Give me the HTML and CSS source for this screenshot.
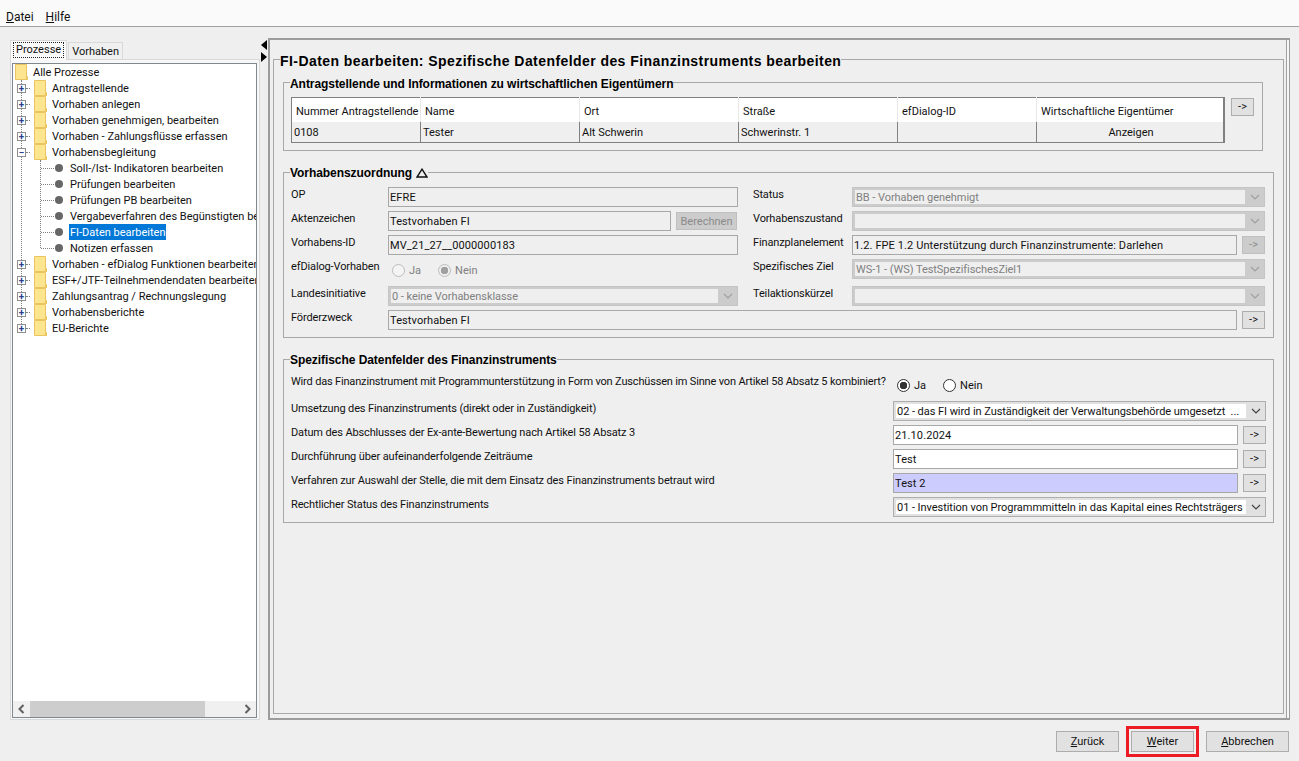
FILE: index.html
```html
<!DOCTYPE html>
<html>
<head>
    <meta charset="UTF-8">
    <title>FI-Daten bearbeiten</title>
    <link rel="stylesheet" href="styles.css">
</head>
<body>
    <svg class="icon-defs" width="0" height="0">
        <symbol id="folder" viewBox="0 0 13 16">
            <path d="M0.5 0.5H11.5V12.5H12.5V15.5H0.5Z" fill="#fde48f" stroke="#eac55f"/>
            <path d="M11.5 12.5V15.5" stroke="#eac55f"/>
        </symbol>
        <symbol id="chevron" viewBox="0 0 10 6">
            <path d="M1 1L5 5L9 1" fill="none" stroke="currentColor" stroke-width="1.2"/>
        </symbol>
    </svg>
    <div class="app">
        <div class="menubar">
            <span class="menu-item"><u>D</u>atei</span>
            <span class="menu-item"><u>H</u>ilfe</span>
        </div>
        <div class="main">
            <div class="side">
                <div class="tabs">
                    <div class="tab tab-active"><span class="tab-focus">Prozesse</span></div>
                    <div class="tab">Vorhaben</div>
                </div>
                <div class="tab-pane">
                    <div class="tree-box">
                        <div class="tree">
                            <div class="tree-row tree-top">
                                <svg class="folder"><use href="#folder"/></svg>
                                <span class="tree-label">Alle Prozesse</span>
                            </div>
                            <ul class="tree-root">
                                <li class="tree-row"><span class="expander">+</span><span class="stub"></span><svg class="folder"><use href="#folder"/></svg><span class="tree-label">Antragstellende</span></li>
                                <li class="tree-row"><span class="expander">+</span><span class="stub"></span><svg class="folder"><use href="#folder"/></svg><span class="tree-label">Vorhaben anlegen</span></li>
                                <li class="tree-row"><span class="expander">+</span><span class="stub"></span><svg class="folder"><use href="#folder"/></svg><span class="tree-label">Vorhaben genehmigen, bearbeiten</span></li>
                                <li class="tree-row"><span class="expander">+</span><span class="stub"></span><svg class="folder"><use href="#folder"/></svg><span class="tree-label">Vorhaben - Zahlungsflüsse erfassen</span></li>
                                <li class="tree-row"><span class="expander">&minus;</span><span class="stub"></span><svg class="folder"><use href="#folder"/></svg><span class="tree-label">Vorhabensbegleitung</span></li>
                                <li>
                                    <ul class="tree-children">
                                        <li class="tree-row tree-leaf"><span class="leaf-stub"></span><span class="bullet"></span><span class="tree-label">Soll-/Ist- Indikatoren bearbeiten</span></li>
                                        <li class="tree-row tree-leaf"><span class="leaf-stub"></span><span class="bullet"></span><span class="tree-label">Prüfungen bearbeiten</span></li>
                                        <li class="tree-row tree-leaf"><span class="leaf-stub"></span><span class="bullet"></span><span class="tree-label">Prüfungen PB bearbeiten</span></li>
                                        <li class="tree-row tree-leaf"><span class="leaf-stub"></span><span class="bullet"></span><span class="tree-label">Vergabeverfahren des Begünstigten bearbeiten</span></li>
                                        <li class="tree-row tree-leaf"><span class="leaf-stub"></span><span class="bullet"></span><span class="tree-label tree-selected">FI-Daten bearbeiten</span></li>
                                        <li class="tree-row tree-leaf"><span class="leaf-stub"></span><span class="bullet"></span><span class="tree-label">Notizen erfassen</span></li>
                                    </ul>
                                </li>
                                <li class="tree-row"><span class="expander">+</span><span class="stub"></span><svg class="folder"><use href="#folder"/></svg><span class="tree-label">Vorhaben - efDialog Funktionen bearbeiten</span></li>
                                <li class="tree-row"><span class="expander">+</span><span class="stub"></span><svg class="folder"><use href="#folder"/></svg><span class="tree-label">ESF+/JTF-Teilnehmendendaten bearbeiten</span></li>
                                <li class="tree-row"><span class="expander">+</span><span class="stub"></span><svg class="folder"><use href="#folder"/></svg><span class="tree-label">Zahlungsantrag / Rechnungslegung</span></li>
                                <li class="tree-row"><span class="expander">+</span><span class="stub"></span><svg class="folder"><use href="#folder"/></svg><span class="tree-label">Vorhabensberichte</span></li>
                                <li class="tree-row"><span class="expander">+</span><span class="stub"></span><svg class="folder"><use href="#folder"/></svg><span class="tree-label">EU-Berichte</span></li>
                            </ul>
                        </div>
                        <div class="hscroll">
                            <svg class="hscroll-arrow" viewBox="0 0 8 10"><path d="M6 1L2 5L6 9" fill="none" stroke="#606060" stroke-width="2"/></svg>
                            <div class="hscroll-track"><div class="hscroll-thumb"></div></div>
                            <svg class="hscroll-arrow" viewBox="0 0 8 10"><path d="M2 1L6 5L2 9" fill="none" stroke="#606060" stroke-width="2"/></svg>
                        </div>
                    </div>
                </div>
            </div>
            <div class="splitter">
                <svg width="8" height="22" viewBox="0 0 8 22">
                    <path d="M7 0V10L1 5Z" fill="#000"/>
                    <path d="M1 12V22L7 17Z" fill="#000"/>
                </svg>
            </div>
            <div class="frame">
                <fieldset class="section-main">
                    <legend class="legend-main">FI-Daten bearbeiten: Spezifische Datenfelder des Finanzinstruments bearbeiten</legend>

                    <fieldset class="section section-owners">
                        <legend>Antragstellende und Informationen zu wirtschaftlichen Eigentümern</legend>
                        <div class="owners-row">
                            <table class="owners-table">
                                <colgroup>
                                    <col class="col-nr"><col class="col-std"><col class="col-std"><col class="col-std"><col class="col-dialog"><col>
                                </colgroup>
                                <thead>
                                    <tr>
                                        <th>Nummer Antragstellende</th>
                                        <th>Name</th>
                                        <th>Ort</th>
                                        <th>Straße</th>
                                        <th>efDialog-ID</th>
                                        <th>Wirtschaftliche Eigentümer</th>
                                    </tr>
                                </thead>
                                <tbody>
                                    <tr>
                                        <td>0108</td>
                                        <td>Tester</td>
                                        <td>Alt Schwerin</td>
                                        <td>Schwerinstr. 1</td>
                                        <td></td>
                                        <td class="cell-center">Anzeigen</td>
                                    </tr>
                                </tbody>
                            </table>
                            <button class="arrow-btn owners-arrow">-&gt;</button>
                        </div>
                    </fieldset>

                    <fieldset class="section section-assign">
                        <legend>Vorhabenszuordnung <svg class="legend-triangle" viewBox="0 0 12 10"><path d="M6 1.2L11 9H1Z" fill="none" stroke="#111" stroke-width="1.4"/></svg></legend>
                        <div class="assign-grid">
                            <label class="field-label">OP</label>
                            <div class="text-field is-readonly">EFRE</div>
                            <span></span>
                            <label class="field-label">Status</label>
                            <div class="combo is-disabled span-3"><span class="combo-text">BB - Vorhaben genehmigt</span><span class="combo-arrow"><svg><use href="#chevron"/></svg></span></div>

                            <label class="field-label">Aktenzeichen</label>
                            <div class="field-with-btn">
                                <div class="text-field is-readonly">Testvorhaben FI</div>
                                <button class="push-btn is-off">Berechnen</button>
                            </div>
                            <span></span>
                            <label class="field-label">Vorhabenszustand</label>
                            <div class="combo is-disabled span-3"><span class="combo-text"></span><span class="combo-arrow"><svg><use href="#chevron"/></svg></span></div>

                            <label class="field-label">Vorhabens-ID</label>
                            <div class="text-field is-readonly">MV_21_27__0000000183</div>
                            <span></span>
                            <label class="field-label">Finanzplanelement</label>
                            <div class="text-field is-readonly">1.2. FPE 1.2 Unterstützung durch Finanzinstrumente: Darlehen</div>
                            <span></span>
                            <button class="arrow-btn is-off">-&gt;</button>

                            <label class="field-label">efDialog-Vorhaben</label>
                            <div class="radio-group is-disabled">
                                <label class="radio-item"><input type="radio" name="dialog" disabled>Ja</label>
                                <label class="radio-item"><input type="radio" name="dialog" disabled checked>Nein</label>
                            </div>
                            <span></span>
                            <label class="field-label">Spezifisches Ziel</label>
                            <div class="combo is-disabled span-3"><span class="combo-text">WS-1 - (WS) TestSpezifischesZiel1</span><span class="combo-arrow"><svg><use href="#chevron"/></svg></span></div>

                            <label class="field-label">Landesinitiative</label>
                            <div class="combo is-disabled"><span class="combo-text">0 - keine Vorhabensklasse</span><span class="combo-arrow"><svg><use href="#chevron"/></svg></span></div>
                            <span></span>
                            <label class="field-label">Teilaktionskürzel</label>
                            <div class="combo is-disabled span-3"><span class="combo-text"></span><span class="combo-arrow"><svg><use href="#chevron"/></svg></span></div>

                            <label class="field-label">Förderzweck</label>
                            <div class="text-field is-readonly span-4">Testvorhaben FI</div>
                            <span></span>
                            <button class="arrow-btn">-&gt;</button>
                        </div>
                    </fieldset>

                    <fieldset class="section section-fields">
                        <legend>Spezifische Datenfelder des Finanzinstruments</legend>
                        <div class="fields-grid">
                            <label class="field-label field-question">Wird das Finanzinstrument mit Programmunterstützung in Form von Zuschüssen im Sinne von Artikel 58 Absatz 5 kombiniert?</label>
                            <div class="radio-group span-3">
                                <label class="radio-item"><input type="radio" name="grant" checked>Ja</label>
                                <label class="radio-item"><input type="radio" name="grant">Nein</label>
                            </div>

                            <label class="field-label">Umsetzung des Finanzinstruments (direkt oder in Zuständigkeit)</label>
                            <div class="combo span-3"><span class="combo-text">02 - das FI wird in Zuständigkeit der Verwaltungsbehörde umgesetzt &nbsp;...</span><span class="combo-arrow"><svg><use href="#chevron"/></svg></span></div>

                            <label class="field-label">Datum des Abschlusses der Ex-ante-Bewertung nach Artikel 58 Absatz 3</label>
                            <div class="text-field">21.10.2024</div>
                            <span></span>
                            <button class="arrow-btn">-&gt;</button>

                            <label class="field-label">Durchführung über aufeinanderfolgende Zeiträume</label>
                            <div class="text-field">Test</div>
                            <span></span>
                            <button class="arrow-btn">-&gt;</button>

                            <label class="field-label">Verfahren zur Auswahl der Stelle, die mit dem Einsatz des Finanzinstruments betraut wird</label>
                            <div class="text-field is-marked">Test 2</div>
                            <span></span>
                            <button class="arrow-btn">-&gt;</button>

                            <label class="field-label">Rechtlicher Status des Finanzinstruments</label>
                            <div class="combo span-3"><span class="combo-text">01 - Investition von Programmmitteln in das Kapital eines Rechtsträgers</span><span class="combo-arrow"><svg><use href="#chevron"/></svg></span></div>
                        </div>
                    </fieldset>
                </fieldset>
            </div>
        </div>
        <div class="footer">
            <button class="push-btn footer-btn"><u>Z</u>urück</button>
            <div class="red-mark"><button class="push-btn footer-btn"><u>W</u>eiter</button></div>
            <button class="push-btn footer-btn footer-btn-wide"><u>A</u>bbrechen</button>
        </div>
    </div>
</body>
</html>
```

FILE: styles.css
```css
* {
    box-sizing: border-box;
}
html, body {
    margin: 0;
    padding: 0;
    height: 100%;
    overflow: hidden;
}
body {
    font-family: Roboto, "Liberation Sans", sans-serif;
    font-size: 11px;
    color: #111;
    background-color: #efefef;
}
button {
    font: inherit;
    color: inherit;
    padding: 0;
}
ul {
    list-style: none;
    margin: 0;
    padding: 0;
}
.icon-defs {
    position: absolute;
}
.app {
    display: flex;
    flex-direction: column;
    height: 761px;
}

/* menu */
.menubar {
    display: flex;
    gap: 12px;
    flex: none;
    height: 27px;
    padding: 9px 0 0 6px;
    background-color: #fafafa;
    border-bottom: 1px solid #a0a0a0;
    font-size: 12px;
    line-height: 16px;
}
.main {
    display: flex;
    flex: none;
    height: 693px;
    padding: 11px 0 0 10px;
}

/* left side */
.side {
    display: flex;
    flex-direction: column;
    flex: none;
    width: 250px;
    height: 680px;
    margin-top: 2px;
}
.tabs {
    display: flex;
    flex: none;
    align-items: flex-end;
    height: 19px;
}
.tab {
    height: 17px;
    padding: 0 3px;
    line-height: 17px;
    background-color: #f0f0f0;
    border: 1px solid #d9d9d9;
    border-bottom: none;
    margin-left: 1px;
}
.tab-active {
    height: 20px;
    margin-left: 0;
    margin-bottom: -1px;
    padding: 2px 3px 0;
    background-color: #fafafa;
    position: relative;
}
.tab-focus {
    display: block;
    padding: 0 2px;
    line-height: 14px;
    outline: 1px dotted #222;
}
.tab-pane {
    flex: 1;
    min-height: 0;
    padding: 3px 2px 1px 1px;
    background-color: #f7f7f7;
    border: 1px solid #d9d9d9;
}
.tree-box {
    display: flex;
    flex-direction: column;
    height: 100%;
    background-color: #fff;
    border: 1px solid #808890;
}
.tree {
    flex: 1;
    min-height: 0;
    overflow: hidden;
    white-space: nowrap;
    line-height: 16px;
}
.tree-row {
    display: flex;
    align-items: center;
    height: 16px;
}
.tree-top {
    padding-left: 2px;
}
.tree-root {
    position: relative;
}
.tree-root::before {
    content: "";
    position: absolute;
    left: 8px;
    top: 0;
    bottom: 8px;
    border-left: 1px dotted #808080;
}
.tree-children {
    position: relative;
}
.tree-children::before {
    content: "";
    position: absolute;
    left: 27px;
    top: 0;
    bottom: 8px;
    border-left: 1px dotted #808080;
}
.expander {
    position: relative;
    flex: none;
    width: 9px;
    height: 9px;
    margin-left: 4px;
    font-size: 10px;
    line-height: 7px;
    font-weight: bold;
    text-align: center;
    color: #2c3f8f;
    background-color: #fff;
    border: 1px solid #8f8f8f;
}
.stub {
    flex: none;
    width: 4px;
    margin-right: 4px;
    border-top: 1px dotted #808080;
}
.folder {
    flex: none;
    width: 13px;
    height: 16px;
}
.tree-label {
    height: 16px;
    margin-left: 4px;
    padding: 1px 1px 0;
}
.tree-leaf {
    padding-left: 28px;
}
.leaf-stub {
    flex: none;
    width: 13px;
    border-top: 1px dotted #808080;
}
.bullet {
    flex: none;
    width: 8px;
    height: 8px;
    margin-left: 1px;
    background-color: #666;
    border-radius: 50%;
}
.tree-leaf .tree-label {
    margin-left: 6px;
}
.tree-selected {
    color: #fff;
    background-color: #0078d7;
}
.hscroll {
    display: flex;
    flex: none;
    align-items: center;
    height: 16px;
    background-color: #f0f0f0;
}
.hscroll-arrow {
    flex: none;
    width: 17px;
    height: 10px;
}
.hscroll-track {
    flex: 1;
    height: 100%;
}
.hscroll-thumb {
    width: 175px;
    height: 100%;
    background-color: #cdcdcd;
}

/* splitter */
.splitter {
    flex: none;
    width: 8px;
    padding-top: 2px;
}
.splitter svg {
    display: block;
}

/* right frame */
.frame {
    display: flex;
    flex: none;
    width: 1022px;
    height: 682px;
    padding: 9px 5px 4px 3px;
    border: 2px solid #9c9c9c;
    border-right-width: 1px;
    box-shadow: inset -2px 0 0 #f7f7f7, inset -3px 0 0 #a0a0a0;
}
fieldset {
    margin: 0;
    min-width: 0;
    border: 1px solid #a8a8a8;
}
legend {
    padding: 2px 0 0;
    margin-left: -1px;
    font-family: "Liberation Sans", Arial, sans-serif;
    font-size: 12px;
    font-weight: bold;
    line-height: 14px;
    letter-spacing: -0.06px;
    color: #000;
}
.section-main {
    flex: 1;
    padding: 0 9px;
}
.legend-main {
    padding-top: 4px;
    margin-left: -3px;
    font-size: 14px;
    line-height: 16px;
    letter-spacing: 0.43px;
}
.section {
    display: block;
}
.section-owners {
    height: 78px;
    margin-top: 4px;
    margin-right: 11px;
    padding: 6px 7px 0;
}
.section-owners legend {
    padding-top: 4px;
}
.section-assign {
    height: 174px;
    margin-top: 13px;
    padding: 7px 8px 0 7px;
}
.section-fields {
    height: 172px;
    margin-top: 13px;
    padding: 5px 7px 0 7px;
}
.legend-triangle {
    width: 12px;
    height: 10px;
    margin-left: 1px;
    vertical-align: -1px;
}

/* table */
.owners-row {
    display: flex;
    align-items: flex-start;
    gap: 6px;
}
.owners-table {
    flex: none;
    width: 934px;
    height: 46px;
    table-layout: fixed;
    border-collapse: collapse;
    border: 1px solid #808080;
    border-right-width: 2px;
}
.col-nr {
    width: 129px;
}
.col-std {
    width: 159px;
}
.col-dialog {
    width: 139px;
}
.owners-table th {
    height: 24px;
    padding: 4px 0 0 4px;
    font-weight: normal;
    text-align: left;
    background-color: #fff;
    border-right: 1px solid #e8e8e8;
    overflow: hidden;
    white-space: nowrap;
}
.owners-table td {
    height: 20px;
    padding: 2px 0 0 2px;
    border-right: 1px solid #808080;
}
.owners-table .cell-center {
    text-align: center;
}
.arrow-btn.owners-arrow {
    margin-top: 1px;
    align-self: flex-start;
}

/* form grids */
.assign-grid {
    display: grid;
    grid-template-columns: 97px 350px 15px 99px 385px 5px 23px;
    grid-template-rows: 20px 20px 20px 23px 20px 20px;
    row-gap: 4px;
}
.fields-grid {
    display: grid;
    grid-template-columns: 602px 345px 5px 23px;
    grid-template-rows: 25px repeat(5, 20px);
    row-gap: 4px;
}
.span-3 {
    grid-column: span 3;
}
.span-4 {
    grid-column: span 4;
}
.field-label {
    margin-top: 1px;
    line-height: 14px;
    letter-spacing: -0.13px;
    white-space: nowrap;
}
.field-label.field-question {
    margin-top: 3px;
    letter-spacing: -0.17px;
}
.text-field {
    flex: 1;
    min-width: 0;
    height: 20px;
    padding-left: 1px;
    line-height: 20px;
    letter-spacing: 0.1px;
    background-color: #fff;
    border: 1px solid #a8a8a8;
    white-space: nowrap;
    overflow: hidden;
}
.text-field.is-readonly {
    background-color: #efefef;
}
.text-field.is-marked {
    background-color: #ccccff;
}
.field-with-btn {
    display: flex;
    gap: 5px;
}
.push-btn {
    background-color: #e1e1e1;
    border: 1px solid #adadad;
}
.push-btn.is-off {
    flex: none;
    width: 61px;
    height: 18px;
    margin: 1px 1px 0 0;
    color: #8a8a8a;
    background-color: #cccccc;
    border-color: #bfbfbf;
}
.arrow-btn {
    flex: none;
    width: 23px;
    height: 18px;
    line-height: 14px;
    background-color: #e1e1e1;
    border: 1px solid #adadad;
    align-self: center;
}
.arrow-btn.is-off {
    color: #8a8a8a;
    background-color: #cccccc;
    border-color: #bfbfbf;
}

/* combo boxes */
.combo {
    display: flex;
    height: 20px;
    padding: 2px;
    background-color: #e1e1e1;
    border: 1px solid #adadad;
}
.combo-text {
    flex: 1;
    min-width: 0;
    padding-left: 1px;
    line-height: 15px;
    letter-spacing: -0.05px;
    background-color: #fff;
    white-space: nowrap;
    overflow: hidden;
}
.combo-arrow {
    display: flex;
    flex: none;
    align-items: center;
    justify-content: center;
    width: 17px;
    padding-left: 3px;
    color: #444;
}
.combo-arrow svg {
    width: 10px;
    height: 6px;
}
.combo.is-disabled {
    background-color: #cccccc;
    border-color: #c4c4c4;
}
.combo.is-disabled .combo-text {
    color: #808080;
    background-color: #efefef;
}
.combo.is-disabled .combo-arrow {
    color: #a0a0a0;
}

/* radio buttons */
.radio-group {
    display: flex;
    gap: 17px;
    padding: 6px 0 0 4px;
}
.radio-item {
    display: flex;
    align-items: center;
    gap: 4px;
    height: 15px;
}
.radio-group.is-disabled {
    padding-top: 4px;
    color: #808080;
}
.radio-item input {
    appearance: none;
    flex: none;
    width: 13px;
    height: 13px;
    margin: 0;
    background-color: #fff;
    border: 1px solid #333;
    border-radius: 50%;
}
.radio-item input:checked {
    background: radial-gradient(circle, #333 0 3.5px, #fff 4px);
}
.radio-item input:disabled {
    border-color: #bcbcbc;
    background-color: #f4f4f4;
}
.radio-item input:disabled:checked {
    background: radial-gradient(circle, #a0a0a0 0 3.5px, #efefef 4px);
}

/* buttons at the bottom */
.footer {
    display: flex;
    flex: none;
    align-items: center;
    justify-content: flex-end;
    gap: 7px;
    padding: 6px 10px 0 0;
}
.footer-btn {
    display: block;
    width: 63px;
    height: 21px;
}
.footer-btn-wide {
    width: 83px;
}
.red-mark {
    padding: 2px;
    border: 3px solid #ed1c24;
}
```
